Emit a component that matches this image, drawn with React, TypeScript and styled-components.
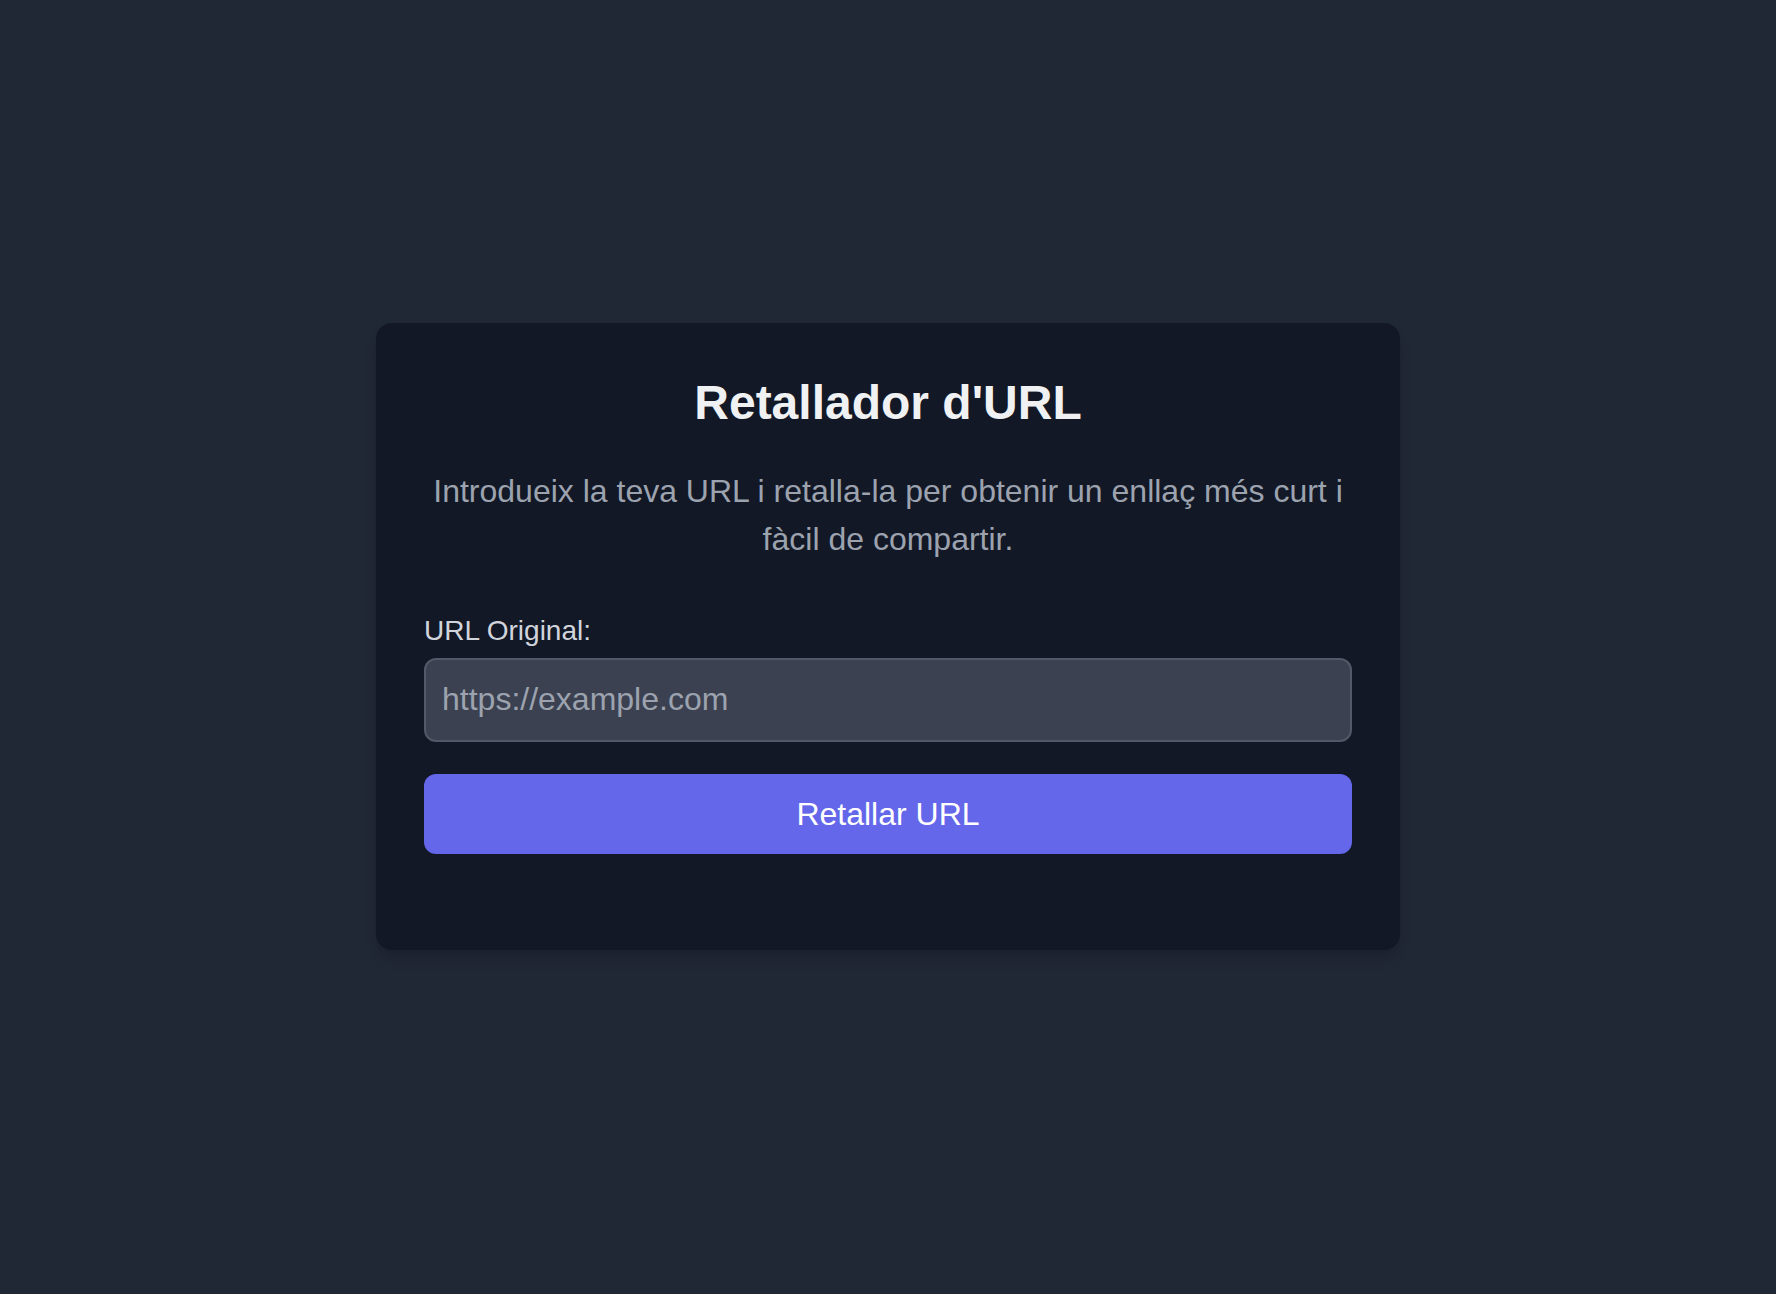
import React from "react";
import styled, { createGlobalStyle } from "styled-components";

const GlobalStyle = createGlobalStyle`
  * { box-sizing: border-box; }
  html, body { margin: 0; padding: 0; background: #202735; }
  body { font-family: "Liberation Sans", Arial, Helvetica, sans-serif; }
`;

const Page = styled.main`
  min-height: 100vh;
  display: flex;
  align-items: center;
  justify-content: center;
  padding-bottom: 22px;
  background: #202735;
`;

const Card = styled.section`
  width: 1024px;
  background: #121826;
  border-radius: 16px;
  padding: 48px;
  box-shadow: 0 10px 15px -3px rgba(0, 0, 0, 0.12), 0 4px 6px -4px rgba(0, 0, 0, 0.12);
`;

const Title = styled.h1`
  margin: 0 0 32px;
  font-size: 48px;
  line-height: 64px;
  font-weight: 700;
  color: #f0f1f3;
  text-align: center;
`;

const Description = styled.p`
  margin: 0 0 48px;
  font-size: 32px;
  line-height: 48px;
  color: #9ca3af;
  text-align: center;
`;

const Form = styled.form`
  display: flex;
  flex-direction: column;
  margin-bottom: 48px;
`;

const Label = styled.label`
  display: block;
  font-size: 28px;
  line-height: 40px;
  color: #d1d5db;
  margin-bottom: 7px;
`;

const Input = styled.input`
  width: 100%;
  height: 84px;
  padding: 16px;
  font-family: inherit;
  font-size: 32px;
  line-height: 48px;
  color: #f3f4f6;
  background: #3b4150;
  border: 2px solid #515867;
  border-radius: 12px;
  outline: none;
  &::placeholder { color: #9ca3af; }
`;

const Button = styled.button`
  margin-top: 32px;
  width: 100%;
  height: 80px;
  font-family: inherit;
  font-size: 32px;
  line-height: 48px;
  color: #ffffff;
  background: #6467e9;
  border: none;
  border-radius: 12px;
  cursor: pointer;
`;

export default function App() {
  return (
    <>
      <GlobalStyle />
      <Page>
        <Card>
          <Title>Retallador d'URL</Title>
          <Description>
            Introdueix la teva URL i retalla-la per obtenir un enllaç més curt i fàcil de compartir.
          </Description>
          <Form onSubmit={(e) => e.preventDefault()}>
            <Label htmlFor="url">URL Original:</Label>
            <Input id="url" type="url" placeholder="https://example.com" />
            <Button type="submit">Retallar URL</Button>
          </Form>
        </Card>
      </Page>
    </>
  );
}
